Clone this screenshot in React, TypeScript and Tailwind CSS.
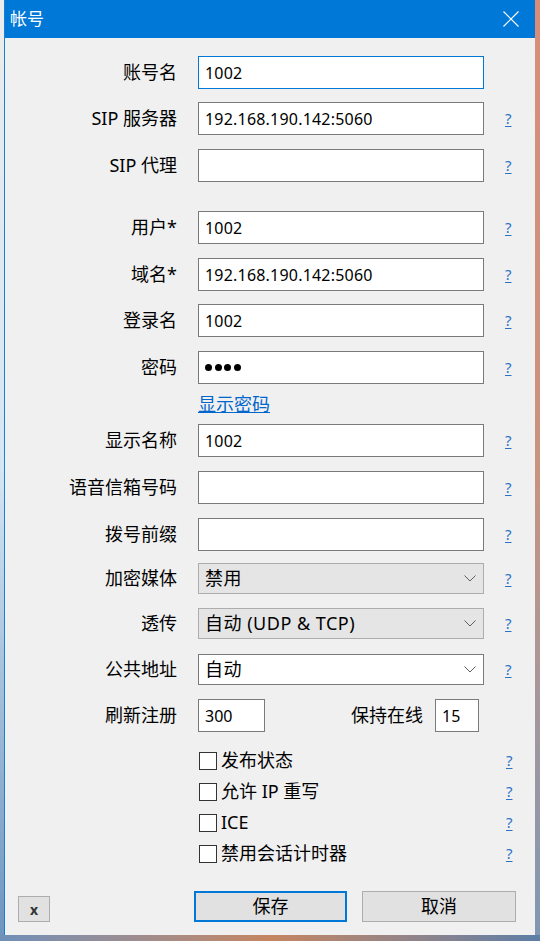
import React from "react";

const Help: React.FC = () => (
    <span className="ml-[21px] text-[15px] leading-none text-[#2b72c6] underline underline-offset-2">
        ?
    </span>
);

const Field: React.FC<{
    label: string;
    className?: string;
    help?: boolean;
    children: React.ReactNode;
}> = ({ label, className = "", help = true, children }) => (
    <div className={`flex items-center ${className}`}>
        <div className="w-[173px] pr-px text-right text-[18px] text-black">{label}</div>
        <div className="ml-[20px] w-[286px]">{children}</div>
        {help && <Help />}
    </div>
);

const TextBox: React.FC<{ value?: string; focused?: boolean }> = ({ value = "", focused }) => (
    <div
        className={`flex h-[33px] items-center bg-white pl-[6px] text-[16px] tracking-[0.2px] text-black border ${
            focused ? "border-[#0078d7]" : "border-[#7a7a7a]"
        }`}
    >
        {value}
    </div>
);

const Chevron: React.FC = () => (
    <svg width="12" height="7" viewBox="0 0 12 7" className="mr-[7px]">
        <path d="M0.5 0.5 L6 6 L11.5 0.5" fill="none" stroke="#5f5f5f" strokeWidth="1" />
    </svg>
);

const Combo: React.FC<{ value: string; white?: boolean }> = ({ value, white }) => (
    <div
        className={`flex h-[31px] items-center justify-between pl-[6px] text-[18px] tracking-[0.5px] text-black border ${
            white ? "bg-white border-[#7a7a7a]" : "bg-[#e5e5e5] border-[#adadad]"
        }`}
    >
        <span>{value}</span>
        <Chevron />
    </div>
);

const Check: React.FC<{ label: string; className?: string }> = ({ label, className = "" }) => (
    <div className={`flex h-[31px] items-center ${className}`}>
        <div className="ml-[194px] flex w-[286px] items-center">
            <span className="h-[18px] w-[18px] border border-[#333] bg-white" />
            <span className="ml-[4px] text-[18px] text-black">{label}</span>
        </div>
        <Help />
    </div>
);

export default function App() {
    return (
        <div className="flex h-[941px] w-[540px] flex-col overflow-hidden font-['Noto_Sans','Noto_Sans_CJK_SC',sans-serif]">
            <div className="flex flex-1">
                <div className="w-[4px] bg-gradient-to-b from-[#ececec] via-[#d6e6f3] to-[#6f95bf]" />
                <div className="flex w-[531px] flex-col border-l border-[#1a7fd4] bg-[#f0f0f0]">
                    {/* title bar */}
                    <div className="flex h-[38px] items-center justify-between bg-[#0078d7] pl-[5px] pr-[16px]">
                        <span className="text-[17px] text-white">帐号</span>
                        <svg width="16" height="16" viewBox="0 0 16 16">
                            <path d="M0.5 0.5 L15.5 15.5 M15.5 0.5 L0.5 15.5" stroke="#fff" strokeWidth="1.2" />
                        </svg>
                    </div>

                    <div className="flex flex-col">
                        <Field label="账号名" className="mt-[18px]" help={false}>
                            <TextBox value="1002" focused />
                        </Field>
                        <Field label="SIP 服务器" className="mt-[13px]">
                            <TextBox value="192.168.190.142:5060" />
                        </Field>
                        <Field label="SIP 代理" className="mt-[14px]">
                            <TextBox />
                        </Field>

                        <Field label="用户*" className="mt-[29px]">
                            <TextBox value="1002" />
                        </Field>
                        <Field label="域名*" className="mt-[14px]">
                            <TextBox value="192.168.190.142:5060" />
                        </Field>
                        <Field label="登录名" className="mt-[13px]">
                            <TextBox value="1002" />
                        </Field>
                        <Field label="密码" className="mt-[14px]">
                            <div className="flex h-[33px] items-center gap-[2.5px] border border-[#7a7a7a] bg-white pl-[6px]">
                                <span className="h-[7px] w-[7px] rounded-full bg-black" />
                                <span className="h-[7px] w-[7px] rounded-full bg-black" />
                                <span className="h-[7px] w-[7px] rounded-full bg-black" />
                                <span className="h-[7px] w-[7px] rounded-full bg-black" />
                            </div>
                        </Field>
                        <div className="flex h-[40px] items-center pl-[193px]">
                            <span className="text-[18px] text-[#0066cc] underline">显示密码</span>
                        </div>

                        <Field label="显示名称">
                            <TextBox value="1002" />
                        </Field>
                        <Field label="语音信箱号码" className="mt-[14px]">
                            <TextBox />
                        </Field>
                        <Field label="拨号前缀" className="mt-[14px]">
                            <TextBox />
                        </Field>

                        <Field label="加密媒体" className="mt-[12px]">
                            <Combo value="禁用" />
                        </Field>
                        <Field label="透传" className="mt-[14px]">
                            <Combo value="自动 (UDP & TCP)" />
                        </Field>
                        <Field label="公共地址" className="mt-[15px]">
                            <Combo value="自动" white />
                        </Field>

                        <div className="mt-[14px] flex items-center">
                            <div className="w-[173px] pr-px text-right text-[18px] text-black">刷新注册</div>
                            <div className="ml-[20px] flex h-[33px] w-[67px] items-center border border-[#7a7a7a] bg-white pl-[6px] text-[16px]">
                                300
                            </div>
                            <div className="ml-[86px] text-[18px] text-black">保持在线</div>
                            <div className="ml-[12px] flex h-[33px] w-[44px] items-center border border-[#7a7a7a] bg-white pl-[6px] text-[16px]">
                                15
                            </div>
                        </div>

                        <Check label="发布状态" className="mt-[13px]" />
                        <Check label="允许 IP 重写" />
                        <Check label="ICE" />
                        <Check label="禁用会话计时器" />

                        <div className="mt-[22px] flex items-end">
                            <button className="ml-[13px] flex h-[26px] w-[32px] items-center justify-center border border-[#adadad] bg-[#e1e1e1] text-[14px] font-bold text-[#333]">
                                x
                            </button>
                            <button className="ml-[144px] flex h-[31px] w-[153px] items-center justify-center border-2 border-[#0078d7] bg-[#e1e1e1] text-[18px] text-black">
                                保存
                            </button>
                            <button className="ml-[15px] flex h-[31px] w-[154px] items-center justify-center border border-[#adadad] bg-[#e1e1e1] text-[18px] text-black">
                                取消
                            </button>
                        </div>
                    </div>
                </div>
                <div className="flex-1 bg-gradient-to-b from-[#d98d78] via-[#c9937f] to-[#7f97b3]" />
            </div>
            <div className="h-[6px] bg-gradient-to-r from-[#6f8fb8] via-[#c58560] to-[#5c7da6]" />
        </div>
    );
}
